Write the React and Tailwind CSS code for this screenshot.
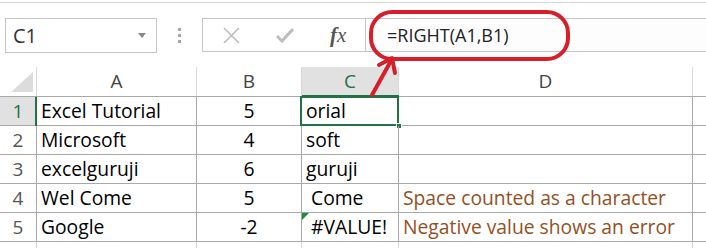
import React from "react";

const cellFont = { fontFamily: '"Open Sans", "Noto Sans", sans-serif' };

const cols = [
  "w-[37px]",
  "w-[160px]",
  "w-[105px]",
  "w-[97px]",
  "w-[294px]",
  "flex-1",
];

const rows = [
  ["1", "Excel Tutorial", "5", "orial", ""],
  ["2", "Microsoft", "4", "soft", ""],
  ["3", "excelguruji", "6", "guruji", ""],
  ["4", "Wel Come", "5", "\u00a0Come", "Space counted as a character"],
  ["5", "Google", "-2", "\u00a0#VALUE!", "Negative value shows an error"],
];

export default function App() {
  return (
    <div
      className="relative w-[706px] h-[248px] overflow-hidden bg-white"
      style={cellFont}
    >
      {/* top line */}
      <div className="h-[3px] border-b border-[#d6d6d6]" />

      {/* formula bar row */}
      <div className="flex items-start mt-[15px] h-[35px]">
        <div className="ml-[5px] w-[152px] h-[35px] border border-[#c6c6c6] flex items-center justify-between pl-[7px] pr-[10px]">
          <span className="text-[20px] text-[#333] leading-none">C1</span>
          <svg width="8" height="5" viewBox="0 0 8 5">
            <path d="M0 0 L8 0 L4 5 Z" fill="#888" />
          </svg>
        </div>
        <div className="w-[45px] h-[35px] flex flex-col items-center justify-center gap-[3px]">
          <div className="w-[3px] h-[3px] bg-[#a6a6a6]" />
          <div className="w-[3px] h-[3px] bg-[#a6a6a6]" />
          <div className="w-[3px] h-[3px] bg-[#a6a6a6]" />
        </div>
        <div className="w-[164px] h-[34px] border border-[#c6c6c6] flex items-center bg-white">
          <svg className="ml-[20px]" width="17" height="17" viewBox="0 0 17 17">
            <path d="M1 1 L16 16 M16 1 L1 16" stroke="#bdbdbd" strokeWidth="1.6" />
          </svg>
          <svg className="ml-[36px]" width="18" height="15" viewBox="0 0 18 15">
            <path d="M1 8 L6 13 L17 1" stroke="#bdbdbd" strokeWidth="3" fill="none" />
          </svg>
          <span
            className="ml-[36px] text-[21px] italic text-[#555] leading-none"
            style={{ fontFamily: '"Liberation Serif", "DejaVu Serif", serif' }}
          >
            <span className="font-semibold">f</span>x
          </span>
        </div>
        <div className="flex-1 h-[34px] border-y border-[#c6c6c6] bg-[#fdfdfd] flex items-center pl-[21px]">
          <span className="text-[18px] text-[#222] leading-none">=RIGHT(A1,B1)</span>
        </div>
      </div>

      {/* sheet */}
      <div className="mt-[14px]">
        {/* header row */}
        <div className="flex h-[30px] border-b border-[#a8a8a8] text-[19px] text-[#444]">
          <div className={`${cols[0]} relative border-r border-[#d8d8d8]`}>
            <svg className="absolute right-[3px] bottom-[4px]" width="22" height="20" viewBox="0 0 22 20">
              <path d="M22 0 L22 20 L0 20 Z" fill="#dcdcdc" />
            </svg>
          </div>
          <div className={`${cols[1]} border-r border-[#d8d8d8] flex items-center justify-center`}>A</div>
          <div className={`${cols[2]} border-r border-[#d8d8d8] flex items-center justify-center`}>B</div>
          <div className={`${cols[3]} relative border-r border-[#d8d8d8] bg-[#e1e1e1] flex items-center justify-center text-[#217346]`}>
            C
            <div className="absolute left-0 right-[-1px] bottom-[-1px] h-[2px] bg-[#217346]" />
          </div>
          <div className={`${cols[4]} border-r border-[#d8d8d8] flex items-center justify-center`}>D</div>
          <div className={cols[5]} />
        </div>

        {rows.map((r, i) => (
          <div key={i} className="flex h-[29px] border-b border-[#a8a8a8] text-[19.3px] text-black">
            <div
              className={`${cols[0]} relative border-r border-[#a8a8a8] flex items-center justify-center text-[19px] text-[#555] ${
                i === 0 ? "bg-[#e1e1e1] text-[#217346]" : ""
              }`}
            >
              {r[0]}
              {i === 0 && <div className="absolute top-0 bottom-[-1px] right-[-1px] w-[2px] bg-[#217346]" />}
            </div>
            <div className={`${cols[1]} border-r border-[#a8a8a8] flex items-center pl-[4px] whitespace-nowrap`}>{r[1]}</div>
            <div className={`${cols[2]} border-r border-[#a8a8a8] flex items-center justify-center`}>{r[2]}</div>
            <div className={`${cols[3]} relative border-r border-[#a8a8a8] flex items-center pl-[4px] whitespace-nowrap`}>
              {r[3]}
              {i === 0 && (
                <>
                  <div className="absolute left-[-2px] top-[-1px] right-[-1px] bottom-[-1px] border-2 border-[#217346]" />
                  <div className="absolute right-[-4px] bottom-[-4px] w-[6px] h-[6px] bg-[#217346] border border-white" />
                </>
              )}
              {i === 4 && (
                <svg className="absolute left-0 top-0" width="7" height="7" viewBox="0 0 7 7">
                  <path d="M0 0 L7 0 L0 7 Z" fill="#1f8a3c" />
                </svg>
              )}
            </div>
            <div className={`${cols[4]} border-r border-[#a8a8a8] flex items-center pl-[4px] whitespace-nowrap text-[#94501f]`}>{r[4]}</div>
            <div className={cols[5]} />
          </div>
        ))}
        <div className="flex h-[10px]">
          <div className={`${cols[0]} border-r border-[#d8d8d8]`} />
          <div className={`${cols[1]} border-r border-[#d8d8d8]`} />
          <div className={`${cols[2]} border-r border-[#d8d8d8]`} />
          <div className={`${cols[3]} border-r border-[#d8d8d8]`} />
          <div className={`${cols[4]} border-r border-[#d8d8d8]`} />
        </div>
      </div>

      {/* red annotation overlay */}
      <svg
        className="absolute left-0 top-0 pointer-events-none"
        width="706"
        height="248"
        viewBox="0 0 706 248"
      >
        <rect x="371" y="12" width="197" height="47" rx="21" fill="none" stroke="#d61f2b" strokeWidth="4" />
        <path d="M372 95 L392 59" stroke="#d61f2b" strokeWidth="4" strokeLinecap="round" fill="none" />
        <path d="M379 65 L392 58 L395 73" stroke="#d61f2b" strokeWidth="4" strokeLinecap="round" strokeLinejoin="round" fill="none" />
      </svg>
    </div>
  );
}
